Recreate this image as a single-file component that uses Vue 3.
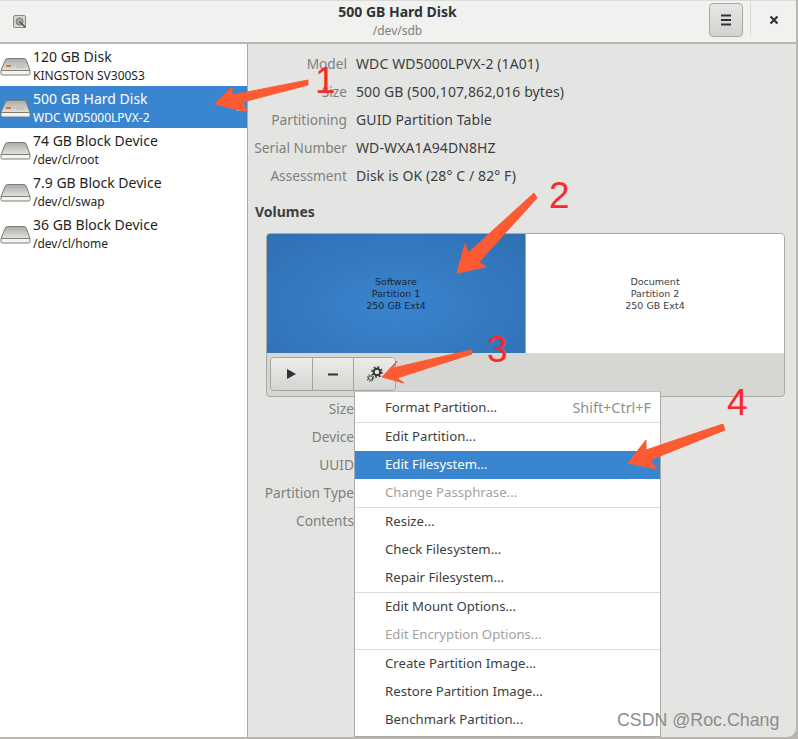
<template>
  <div class="win">
    <div class="shell">
      <header class="titlebar">
        <div class="app-icon">
          <svg width="16" height="16" viewBox="0 0 16 16">
            <rect x="1.500" y="1.500" width="12" height="12" rx="1.500" fill="#d6d6d3" stroke="#8a8a85" />
            <circle cx="7.500" cy="7.500" r="3.500" fill="#a8a8a4" stroke="#777771" />
            <path d="M7.500 7.500l6 6" stroke="#55554f" stroke-width="1.600" />
          </svg>
        </div>
        <div class="title">
          <strong>500 GB Hard Disk</strong>
          <span>/dev/sdb</span>
        </div>
        <button class="menu-btn">
          <svg width="12" height="12" viewBox="0 0 12 12"><path d="M1 1.500h10M1 6h10M1 10.500h10" stroke="#2e3436" stroke-width="2" /></svg>
        </button>
        <div class="tb-sep"></div>
        <div class="close">
          <svg width="12" height="12" viewBox="0 0 12 12"><path d="M2.500 2.500l7 7M9.500 2.500l-7 7" stroke="#2e3436" stroke-width="2.200" /></svg>
        </div>
      </header>

      <div class="body">
        <aside class="sidebar">
          <div v-for="d in disks" :key="d.name" class="disk" :class="{ sel: d.sel }">
            <svg class="disk-icon" width="32" height="24" viewBox="0 0 32 24">
              <defs>
                <linearGradient id="hd" x1="0" y1="0" x2="0" y2="1">
                  <stop offset="0" stop-color="#a9a9a5" />
                  <stop offset="1" stop-color="#e2e2df" />
                </linearGradient>
              </defs>
              <path d="M7.500 3.500h16.500q1.500 0 2.200 1.500L30 15.500H1L5.300 5q.7-1.500 2.200-1.500z" fill="url(#hd)" stroke="#7d7d77" />
              <path d="M1 15.500h29v3a1.500 1.500 0 0 1-1.500 1.500h-26A1.500 1.500 0 0 1 1 18.500z" fill="#f4f4f2" stroke="#7d7d77" />
              <rect v-if="d.orange" x="6" y="10" width="5" height="2" fill="#d9743f" />
              <rect v-if="d.orange" x="16" y="8" width="8" height="5" fill="#c2c2be" />
            </svg>
            <div class="disk-text">
              <div class="disk-name">{{ d.name }}</div>
              <div class="disk-sub">{{ d.sub }}</div>
            </div>
            <span v-if="d.sel" class="zz">zz</span>
          </div>
        </aside>

        <main class="detail">
          <dl class="info">
            <template v-for="r in info" :key="r[0]">
              <dt>{{ r[0] }}</dt>
              <dd>{{ r[1] }}</dd>
            </template>
          </dl>

          <h3 class="volumes">Volumes</h3>

          <div class="vol-box">
            <div class="parts">
              <div class="part part-sel">
                <span>Software</span><span>Partition 1</span><span>250 GB Ext4</span>
              </div>
              <div class="part">
                <span>Document</span><span>Partition 2</span><span>250 GB Ext4</span>
              </div>
            </div>
            <div class="toolbar">
              <div class="btns">
                <button class="tool">
                  <svg width="12" height="12" viewBox="0 0 12 12"><path d="M2 1l9 5-9 5z" fill="#2e3436" /></svg>
                </button>
                <button class="tool">
                  <svg width="12" height="12" viewBox="0 0 12 12"><path d="M1 6.500h10" stroke="#2e3436" stroke-width="2" /></svg>
                </button>
                <button class="tool">
                  <svg width="18" height="16" viewBox="0 0 18 16">
                    <circle cx="11" cy="6" r="3.300" fill="none" stroke="#2e3436" stroke-width="2" />
                    <circle cx="11" cy="6" r="5" fill="none" stroke="#2e3436" stroke-width="1.500" stroke-dasharray="1.900 2" />
                    <circle cx="4.500" cy="12" r="2" fill="none" stroke="#555" stroke-width="1.200" />
                    <circle cx="4.500" cy="12" r="3.300" fill="none" stroke="#555" stroke-width="1.200" stroke-dasharray="1.300 1.300" />
                  </svg>
                </button>
              </div>
            </div>
          </div>

          <dl class="info lower">
            <template v-for="l in lower" :key="l">
              <dt>{{ l }}</dt>
              <dd></dd>
            </template>
          </dl>
        </main>
      </div>
    </div>

    <div class="menu">
      <template v-for="(g, i) in menu" :key="i">
        <div v-if="i" class="menu-sep"></div>
        <div
          v-for="m in g"
          :key="m.t"
          class="menu-item"
          :class="{ hot: m.hot, off: m.off }"
        >
          <span>{{ m.t }}</span>
          <span v-if="m.k" class="accel">{{ m.k }}</span>
        </div>
      </template>
    </div>

    <svg class="notes" width="798" height="739" viewBox="0 0 798 739">
      <g fill="#fc5a32" stroke="#fc5a32" stroke-width="1" stroke-linejoin="round">
        <path d="M308 80L232 95 232 87 215 104 247 112 243 102 308 85z" />
        <path d="M534 193L468 253 465 244 457 273 486 267 479 262 537 198z" />
        <path d="M471 350L393 368 397 361 382 377 404 383 397 378 472 354z" />
        <path d="M723 424L646 450 646 440 628 463 657 469 650 460 725 430z" />
      </g>
      <g class="nums">
        <text x="315" y="93">1</text>
        <text x="549" y="208">2</text>
        <text x="487" y="362">3</text>
        <text x="727" y="415">4</text>
      </g>
      <text class="mark" x="617" y="726">CSDN @Roc.Chang</text>
    </svg>
  </div>
</template>

<script setup>
const disks = [
  { name: '120 GB Disk', sub: 'KINGSTON SV300S3', orange: true },
  { name: '500 GB Hard Disk', sub: 'WDC WD5000LPVX-2', orange: true, sel: true },
  { name: '74 GB Block Device', sub: '/dev/cl/root' },
  { name: '7.9 GB Block Device', sub: '/dev/cl/swap' },
  { name: '36 GB Block Device', sub: '/dev/cl/home' }
]

const info = [
  ['Model', 'WDC WD5000LPVX-2 (1A01)'],
  ['Size', '500 GB (500,107,862,016 bytes)'],
  ['Partitioning', 'GUID Partition Table'],
  ['Serial Number', 'WD-WXA1A94DN8HZ'],
  ['Assessment', 'Disk is OK (28° C / 82° F)']
]

const lower = ['Size', 'Device', 'UUID', 'Partition Type', 'Contents']

const menu = [
  [{ t: 'Format Partition...', k: 'Shift+Ctrl+F' }],
  [
    { t: 'Edit Partition...' },
    { t: 'Edit Filesystem...', hot: true },
    { t: 'Change Passphrase...', off: true }
  ],
  [{ t: 'Resize...' }, { t: 'Check Filesystem...' }, { t: 'Repair Filesystem...' }],
  [{ t: 'Edit Mount Options...' }, { t: 'Edit Encryption Options...', off: true }],
  [{ t: 'Create Partition Image...' }, { t: 'Restore Partition Image...' }, { t: 'Benchmark Partition...' }]
]
</script>

<style>
html, body { margin: 0; overflow: hidden; }
</style>

<style scoped>
.win {
  position: relative;
  width: 798px;
  height: 739px;
  overflow: hidden;
  background: #b9b6b0;
  color: #2e3436;
  font-family: "Noto Sans", "Open Sans", sans-serif;
  font-size: 14px;
}
.shell {
  width: 796px;
  height: 737px;
  display: flex;
  flex-direction: column;
  overflow: hidden;
  background: #e4e4e2;
  border-bottom-right-radius: 9px;
}

.titlebar {
  position: relative;
  height: 41px;
  flex: none;
  display: flex;
  align-items: center;
  background: #f1f1f0;
  border-top: 1px solid #dcdcda;
  border-bottom: 2px solid #b8b8b5;
  box-sizing: content-box;
}
.app-icon { width: 16px; height: 16px; margin-left: 12px; }
.title {
  flex: 1;
  padding-left: 58px;
  display: flex;
  flex-direction: column;
  align-items: center;
  margin-top: -2px;
}
.title strong { font-size: 14px; line-height: 20px; font-weight: 700; color: #2e3436; }
.title span { font-size: 12px; line-height: 17px; color: #7b7d7b; }
.menu-btn {
  width: 34px;
  height: 34px;
  margin: -4px 7px 0 0;
  padding: 0;
  display: flex;
  align-items: center;
  justify-content: center;
  background: linear-gradient(#e6e6e4, #d2d2cf);
  border: 1px solid #a8a8a3;
  border-radius: 4px;
}
.tb-sep { width: 1px; height: 33px; margin-top: -4px; background: #d8d8d5; }
.close {
  width: 45px;
  display: flex;
  justify-content: center;
  margin-top: -3px;
}

.body { flex: 1; display: flex; min-height: 0; }

.sidebar {
  width: 247px;
  flex: none;
  background: #fff;
  border-right: 1px solid #a9a9a5;
}
.disk {
  position: relative;
  height: 42px;
  display: flex;
  align-items: center;
  color: #1c1f1f;
}
.disk.sel { background: #3a85cf; color: #fff; }
.disk-icon { flex: none; margin: 3px 1px 0 0; }
.disk-name { font-size: 14px; line-height: 19px; }
.disk-sub { margin-top: 2px; font-size: 12px; line-height: 16px; }
.disk-text { margin-top: 1px; }
.zz {
  position: absolute;
  right: 3px;
  top: 15px;
  font-size: 10px;
  line-height: 12px;
  letter-spacing: -1px;
  color: #a9c9ea;
}

.detail { flex: 1; min-width: 0; padding-top: 5px; }

.info {
  margin: 0;
  display: grid;
  grid-template-columns: 99px 1fr;
  column-gap: 9px;
  grid-auto-rows: 28px;
  align-items: center;
}
.info dt { text-align: right; font-size: 13.700px; color: #7e807e; }
.info dd { margin: 0; letter-spacing: .1px; color: #3b3f40; }

.volumes {
  margin: 0 0 0 7px;
  padding-top: 13px;
  font-size: 14px;
  font-weight: 700;
  line-height: 20px;
  color: #3b3f40;
}

.vol-box {
  margin: 11px 11px 0 18px;
  height: 162px;
  display: flex;
  flex-direction: column;
  background: #d6d6d3;
  border: 1px solid #a9a9a5;
  border-radius: 4px;
  overflow: hidden;
}
.parts { height: 119px; flex: none; display: flex; }
.part {
  flex: 1;
  display: flex;
  flex-direction: column;
  align-items: center;
  justify-content: center;
  background: #fff;
  font-family: "DejaVu Sans", sans-serif;
  font-size: 9.500px;
  line-height: 12px;
  color: #3b3f40;
}
.part-sel {
  background: radial-gradient(ellipse at 50% 60%, #3a85cf, #2f6fb2);
  color: #16263a;
  border-right: 1px solid #a9a9a5;
}
.toolbar { flex: 1; padding: 4px 0 0 3px; }
.btns {
  width: 126px;
  box-sizing: border-box;
  display: flex;
  border: 1px solid #a3a39f;
  border-radius: 4px;
  overflow: hidden;
}
.tool {
  flex: 1;
  height: 32px;
  padding: 0;
  display: flex;
  align-items: center;
  justify-content: center;
  background: linear-gradient(#ececea, #d4d4d1);
  border: 0;
  border-left: 1px solid #a3a39f;
}
.tool:first-child { border-left: 0; }

.lower { margin-top: -3px; grid-template-columns: 106px 1fr; }

.menu {
  position: absolute;
  left: 354px;
  top: 391px;
  width: 305px;
  padding: 2px 0;
  background: #fff;
  border: 1px solid #a9a9a5;
  border-top-color: #c4c4c0;
  font-size: 13.200px;
  color: #3b3f40;
}
.menu-item {
  height: 28px;
  box-sizing: border-box;
  padding: 0 9px 2px 30px;
  display: flex;
  align-items: center;
  justify-content: space-between;
}
.menu-item.hot { background: #3a85cf; color: #fff; }
.menu-item.off { color: #a0a3a2; }
.accel { font-size: 14.400px; color: #8e9190; }
.menu-sep { height: 1px; background: #dededc; }

.notes { position: absolute; left: 0; top: 0; pointer-events: none; }
.nums text {
  font-family: "Liberation Sans", sans-serif;
  font-size: 37px;
  fill: #fa2a2a;
}
.mark {
  font-family: "Liberation Sans", sans-serif;
  font-size: 17.800px;
  fill: #8c8c8c;
}
</style>
